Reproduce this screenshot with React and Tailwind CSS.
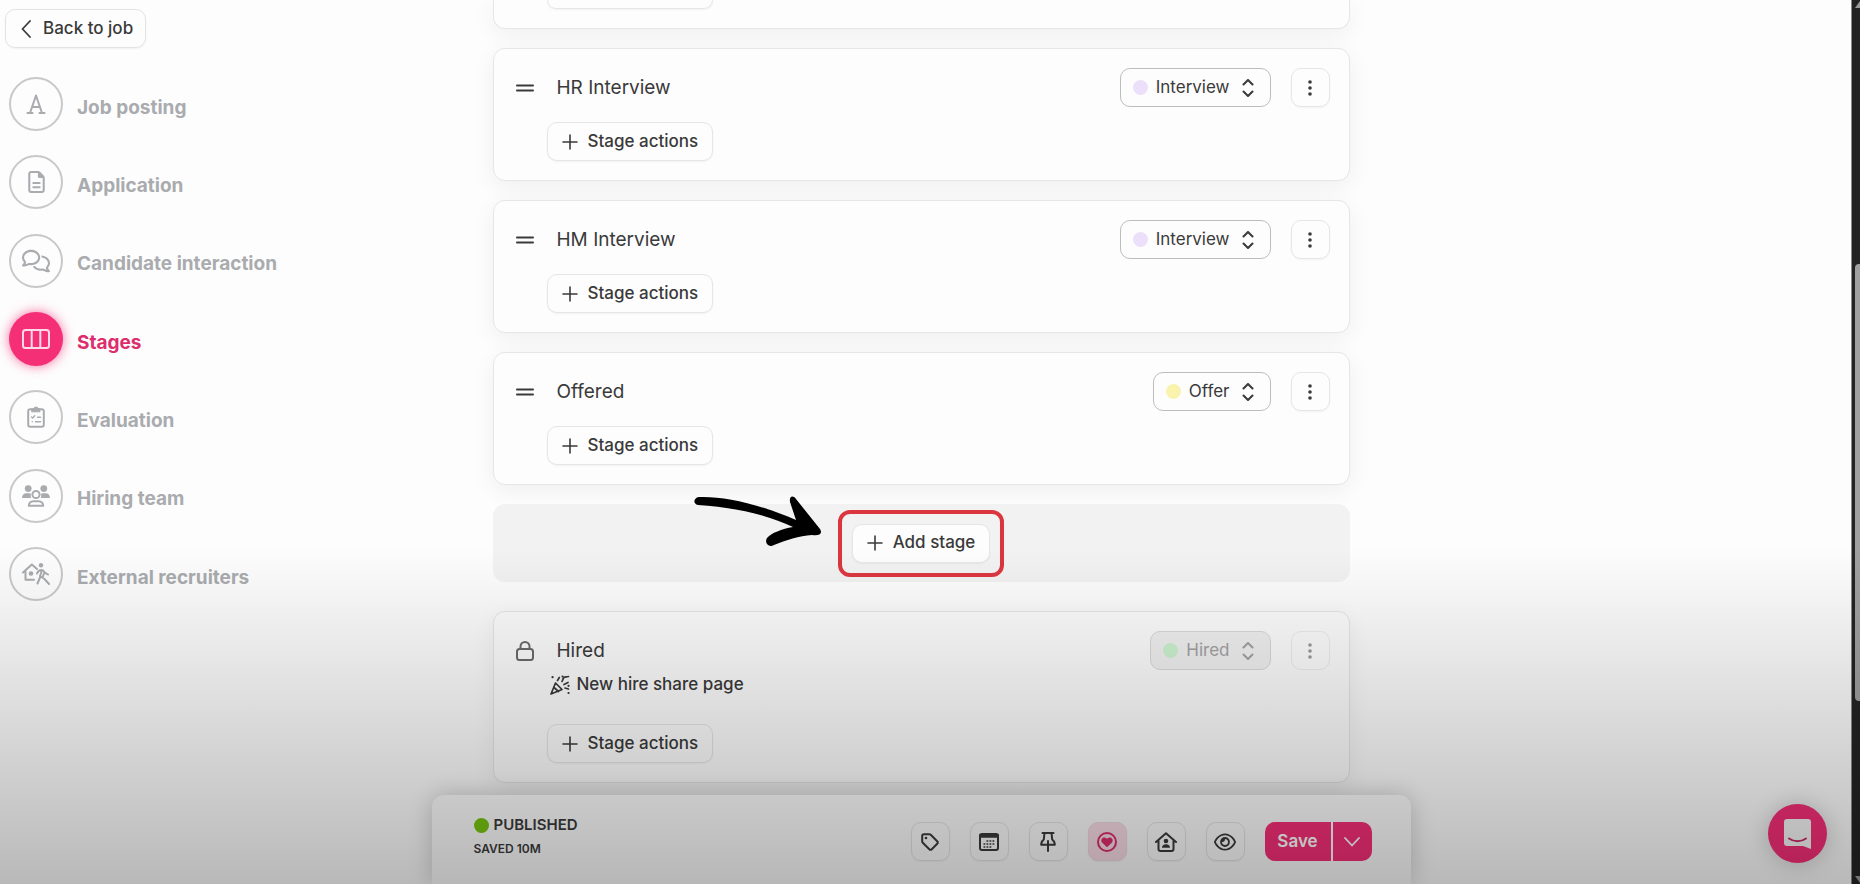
import { FaRegComments, FaRegEye, FaRegFileLines } from 'react-icons/fa6';

/* --- Icons --- */
const Svg = ({ children, className = '', viewBox = '0 0 24 24', strokeWidth = 2 }) => (
  <svg
    aria-hidden="true"
    className={className}
    viewBox={viewBox}
    fill="none"
    stroke="currentColor"
    strokeWidth={strokeWidth}
    strokeLinecap="round"
    strokeLinejoin="round"
  >
    {children}
  </svg>
);

const BackIcon = () => (
  <Svg className="w-[10px] h-[18px]" viewBox="0 0 10 18" strokeWidth={1.8}>
    <path d="M9 1 1.500 9 9 17" />
  </Svg>
);

const DownIcon = () => (
  <Svg className="w-4 h-[10px]" viewBox="0 0 16 10" strokeWidth={1.8}>
    <path d="m1 1 7 7.500L15 1" />
  </Svg>
);

const SerifAIcon = () => (
  <Svg className="w-5 h-5" viewBox="0 0 20 20">
    <path d="M4 19 10 1.500 16 19M6 13h8M1.500 19h5M13.500 19h5" />
  </Svg>
);

const ColumnsIcon = () => (
  <Svg className="w-7 h-5" viewBox="0 0 28 20">
    <rect x="1" y="1" width="26" height="18" rx="2.500" />
    <path d="M9.700 1v18M18.300 1v18" />
  </Svg>
);

const ClipboardIcon = () => (
  <Svg className="w-[18px] h-[22px]" viewBox="0 0 18 22">
    <rect x="1.200" y="3.200" width="15.600" height="17.600" rx="2" />
    <path d="M5 2.800h1.600a2.500 2.500 0 0 1 4.800 0H13v3H5z" fill="currentColor" strokeWidth="1" />
    <path d="m4.500 11 1.200 1 2-2.200M10.500 11.300h3M5.200 15.800h.1M8.500 15.800h5" strokeWidth="1.400" />
  </Svg>
);

const TeamIcon = () => (
  <Svg className="w-7 h-[22px]" viewBox="0 0 28 22">
    <g fill="currentColor" stroke="none">
      <circle cx="6.200" cy="3.600" r="3.400" />
      <circle cx="21.800" cy="3.600" r="3.400" />
      <path d="M0 13c0-3 1.800-4.800 4.500-4.800h2.600c.8 0 1.500.2 2 .6-.6 1.500-.5 3 .1 4.200zM28 13c0-3-1.800-4.800-4.500-4.800h-2.600c-.8 0-1.500.2-2 .6.6 1.500.5 3-.1 4.200z" />
    </g>
    <circle cx="14" cy="9.500" r="3.600" />
    <path d="M6.800 20.800c0-2.700 1.900-4.600 4.600-4.600h5.200c2.700 0 4.600 1.900 4.600 4.600z" />
  </Svg>
);

const RecruiterIcon = () => (
  <Svg className="w-7 h-[22px]" viewBox="0 0 28 22">
    <path d="M1 9.500 9.800 1.500 15 6M3.500 8.500v8.300h8.500" />
    <circle cx="19" cy="2.200" r="2.200" fill="currentColor" stroke="none" />
    <circle cx="9" cy="10.500" r="2.300" fill="currentColor" stroke="none" />
    <path d="M15 10.500c1-2.500 2.500-3.500 4.500-3.500s2.500 1 3.300 2.600l3.200 1.900M20 7.500l-2 5.500 4.500 3 4.500 5M18 14.500 15.500 20.500M22 10.500l-1.500 4" />
  </Svg>
);

const HandleIcon = () => (
  <Svg className="w-[18px] h-[18px]" viewBox="0 0 18 18">
    <path d="M1 6.500h16M1 11.500h16" />
  </Svg>
);

const LockIcon = () => (
  <Svg className="w-[18px] h-5" viewBox="0 0 18 20">
    <rect x="1" y="8" width="16" height="11" rx="2.500" />
    <path d="M4.500 8V5.500a4.500 4.500 0 0 1 9 0V8" />
  </Svg>
);

const PlusIcon = () => (
  <Svg className="w-4 h-4" viewBox="0 0 16 16" strokeWidth={1.6}>
    <path d="M8 1v14M1 8h14" />
  </Svg>
);

const UpDownIcon = () => (
  <Svg className="w-3 h-[18px]" viewBox="0 0 12 18">
    <path d="m1.500 5.500 4.500-4.500 4.500 4.500M1.500 12.500 6 17l4.500-4.500" />
  </Svg>
);

const DotsIcon = () => (
  <svg aria-hidden="true" className="w-1 h-4" viewBox="0 0 4 16" fill="currentColor">
    <circle cx="2" cy="2" r="1.800" />
    <circle cx="2" cy="8" r="1.800" />
    <circle cx="2" cy="14" r="1.800" />
  </svg>
);

const ConfettiIcon = () => (
  <Svg className="w-5 h-5" viewBox="0 0 20 20" strokeWidth={1.7}>
    <path d="M5.500 8 1 19l11-4.500zM4 12.500l4.500 4" />
    <path d="m7.500 5.500 1.800-3M12 6.500c1-1 .5-3 2-4s2-.3 4.500-1M14 9.500l4-2M15 13l3.500 1" />
    <path d="M2.500 2.200h.1M12.500 1.500h.1M18.500 18h.1M18.500 10.800h.1" strokeWidth="2.200" />
  </Svg>
);

const TagIcon = () => (
  <Svg className="w-[18px] h-[18px]" viewBox="0 0 18 18">
    <path d="M1.200 3a1.800 1.800 0 0 1 1.800-1.800h5.300a2 2 0 0 1 1.400.6l6.500 6.500a1.800 1.800 0 0 1 0 2.500l-5.400 5.400a1.800 1.800 0 0 1-2.500 0L1.800 9.700a2 2 0 0 1-.6-1.400z" />
    <circle cx="5" cy="5" r="1.300" fill="currentColor" stroke="none" />
  </Svg>
);

const CalendarIcon = () => (
  <Svg className="w-5 h-[18px]" viewBox="0 0 20 18">
    <rect x="1" y="1" width="18" height="16" rx="2" />
    <path d="M1 3h18" strokeWidth="3.500" />
    <path d="M7.500 8h9M4.500 11h12M4.500 14h9" strokeWidth="1.700" strokeDasharray="1.800 1.200" strokeLinecap="butt" />
  </Svg>
);

const PinIcon = () => (
  <Svg className="w-4 h-5" viewBox="0 0 16 20">
    <path d="M2.500 1h11M4.500 1l-.7 6.500C2 8.800 1.200 10.300 1.200 12.800h13.600c0-2.500-.8-4-2.600-5.300L11.500 1M8 9v10" />
  </Svg>
);

const HeartIcon = () => (
  <Svg className="w-5 h-5" viewBox="0 0 20 20">
    <circle cx="10" cy="10" r="9" />
    <path d="M10 15.200 5 10.500c-2.500-3 1.700-7 5-3.700 3.300-3.300 7.500.7 5 3.700z" fill="currentColor" stroke="none" />
  </Svg>
);

const HouseUserIcon = () => (
  <Svg className="w-[22px] h-5" viewBox="0 0 22 20">
    <path d="M1 10 11 1.200 21 10M3.500 8.500V17a2 2 0 0 0 2 2h11a2 2 0 0 0 2-2V8.500" />
    <circle cx="11" cy="9" r="2.300" fill="currentColor" stroke="none" />
    <path d="M7 15.800c0-2.200 1.500-3.500 4-3.500s4 1.300 4 3.500z" fill="currentColor" stroke="none" />
  </Svg>
);

/* --- Data --- */
const navItems = [
  { label: 'Job posting', icon: <SerifAIcon /> },
  { label: 'Application', icon: <FaRegFileLines className="w-[17px] h-[22px]" /> },
  { label: 'Candidate interaction', icon: <FaRegComments className="w-7 h-6" /> },
  { label: 'Stages', icon: <ColumnsIcon />, active: true },
  { label: 'Evaluation', icon: <ClipboardIcon /> },
  { label: 'Hiring team', icon: <TeamIcon /> },
  { label: 'External recruiters', icon: <RecruiterIcon /> },
];

const stages = [
  { id: 'hr', name: 'HR Interview', type: 'Interview', dot: 'bg-[#ecdffa]' },
  { id: 'hm', name: 'HM Interview', type: 'Interview', dot: 'bg-[#ecdffa]' },
  { id: 'offered', name: 'Offered', type: 'Offer', dot: 'bg-[#f9f3ae]' },
];

const tools = [
  { label: 'Tags', icon: <TagIcon /> },
  { label: 'Calendar', icon: <CalendarIcon /> },
  { label: 'Pin', icon: <PinIcon /> },
  { label: 'Favourite', icon: <HeartIcon />, active: true },
  { label: 'Internal page', icon: <HouseUserIcon /> },
  { label: 'Preview', icon: <FaRegEye className="w-[22px] h-5" /> },
];

/* --- Pieces --- */
const ActionButton = ({ children }) => (
  <button className="inline-flex items-center gap-2.5 h-[39px] px-[14px] rounded-[10px] border border-[#e6e6e6] bg-[#fdfdfd] text-[17px] font-medium shadow-xs whitespace-nowrap">
    <PlusIcon />
    {children}
  </button>
);

const StageCard = ({ id, name, type, dot, locked, children }) => (
  <section className="rounded-xl border border-[#e6e6e6] bg-[#fdfdfd] p-[19px] shadow-[0_6px_24px_rgba(0,0,0,0.06)]">
    <div className="flex items-center">
      <span className="flex justify-center w-6 mr-5">
        {locked ? <span className="text-[#6b6b6b]"><LockIcon /></span> : <HandleIcon />}
      </span>
      <h2 className="flex-1 text-[19px] leading-6">{name}</h2>

      <label
        className={`relative flex items-center h-[39px] pl-3 rounded-[10px] border text-[17px] ${
          locked ? 'border-[#d9d9d9] bg-[#f1f1f1] text-[#a2a2a4]' : 'border-[#bdbdbd] bg-[#fdfdfd]'
        }`}
      >
        <span className={`w-[15px] h-[15px] rounded-full ${dot}`}></span>
        <select
          id={`stage-${id}`}
          aria-label={`${name} type`}
          disabled={locked}
          defaultValue={type}
          className="appearance-none field-sizing-content h-full pl-2 pr-10 bg-transparent outline-none"
        >
          <option>{type}</option>
        </select>
        <span className="absolute right-4 pointer-events-none">
          <UpDownIcon />
        </span>
      </label>

      <button
        aria-label={`${name} options`}
        disabled={locked}
        className={`flex items-center justify-center w-[39px] h-[39px] ml-5 rounded-[10px] border ${
          locked ? 'border-[#ededed] text-[#9a9a9a]' : 'border-[#e6e6e6] shadow-xs'
        }`}
      >
        <DotsIcon />
      </button>
    </div>
    {children}
    <div className="mt-[15px] pl-[34px] flex">
      <ActionButton>Stage actions</ActionButton>
    </div>
  </section>
);

const Sidebar = () => (
  <aside className="flex flex-col items-start pt-[9px] pl-[5px]">
    <a
      href="#job"
      className="flex items-center gap-3 h-[39px] pl-[15px] pr-3 rounded-[10px] border border-[#e3e3e3] text-[17px] font-medium shadow-xs whitespace-nowrap"
    >
      <BackIcon />
      Back to job
    </a>
    <nav className="flex flex-col justify-between h-[524px] mt-[29px] pl-1">
      {navItems.map((item) => (
        <a
          key={item.label}
          href="#section"
          className={`flex items-center gap-[14px] text-[19px] font-bold whitespace-nowrap ${
            item.active ? 'text-[#dc2d6c]' : 'text-[#a9abae]'
          }`}
        >
          <span
            className={`flex items-center justify-center w-[54px] h-[54px] rounded-full ${
              item.active
                ? 'bg-[#f42f76] text-[#ffd9e7] shadow-[0_0_12px_rgba(244,47,118,0.7)]'
                : 'border-2 border-[#c8c8c8]'
            }`}
          >
            {item.icon}
          </span>
          <span className="pt-2">{item.label}</span>
        </a>
      ))}
    </nav>
  </aside>
);

const BottomBar = () => (
  <footer className="absolute inset-x-0 bottom-0 pr-[9px]">
    <div className="flex items-start justify-between max-w-[979px] h-[89px] mx-auto pt-[18px] pl-[42px] pr-[39px] rounded-t-xl bg-[#fbfbfb] shadow-[0_0_24px_rgba(0,0,0,0.2)]">
      <div className="font-semibold">
        <p className="flex items-center gap-[5px] text-[15px] leading-6">
          <span className="w-[15px] h-[15px] rounded-full bg-[#77c411]"></span>
          PUBLISHED
        </p>
        <p className="text-xs leading-6">SAVED 10M</p>
      </div>

      <div className="flex items-center gap-5 pt-[9px]">
        {tools.map((tool) => (
          <button
            key={tool.label}
            aria-label={tool.label}
            className={`flex items-center justify-center w-[39px] h-[39px] rounded-[10px] border shadow-xs ${
              tool.active ? 'border-[#f3d5e0] bg-[#f8dbe5] text-[#dc2d6c]' : 'border-[#e3e3e3]'
            }`}
          >
            {tool.icon}
          </button>
        ))}
        <div className="flex gap-0.5 text-white">
          <button className="w-[66px] h-[39px] rounded-l-[10px] bg-[#f42f76] text-[17px] font-semibold">Save</button>
          <button aria-label="More save options" className="flex items-center justify-center w-[39px] h-[39px] rounded-r-[10px] bg-[#f42f76]">
            <DownIcon />
          </button>
        </div>
      </div>
    </div>
  </footer>
);

const Scrollbar = () => (
  <div className="flex flex-col w-[9px] h-full pl-[3px] border-l border-[#8a8a8a] bg-[#232323] text-[#9a9a9a]">
    <svg aria-hidden="true" className="w-[5px] h-2" viewBox="0 0 5 8" fill="currentColor">
      <path d="M0 8 5 1v7z" />
    </svg>
    <div className="flex-[256]"></div>
    <div className="flex-[437] rounded-l-sm bg-[#a0a0a0]"></div>
    <div className="flex-[175]"></div>
    <svg aria-hidden="true" className="w-[5px] h-2" viewBox="0 0 5 8" fill="currentColor">
      <path d="M0 0 5 7V0z" />
    </svg>
  </div>
);

export default function App() {
  return (
    <div className="relative flex h-screen overflow-hidden bg-[#fdfdfd] font-['Inter',sans-serif] text-[#3a3a3a]">
      <div className="relative flex-1 grid grid-cols-[minmax(0,1fr)_minmax(0,857px)_minmax(0,1fr)] pr-[9px]">
        <Sidebar />

        <main className="flex flex-col gap-[19px]">
          {/* Tail of the stage scrolled off the top */}
          <div className="h-[29px] pl-[53px] rounded-b-xl border border-t-0 border-[#e6e6e6] shadow-[0_6px_24px_rgba(0,0,0,0.06)]">
            <button
              aria-label="Stage actions"
              className="block w-[166px] h-[9px] rounded-b-[10px] border border-t-0 border-[#e6e6e6] shadow-xs"
            ></button>
          </div>

          {stages.map((stage) => (
            <StageCard key={stage.id} {...stage} />
          ))}

          {/* Add stage */}
          <div className="relative flex items-center justify-center h-[78px] rounded-xl bg-[#f2f2f2]">
            <div className="p-2.5 rounded-xl border-4 border-[#db3640]">
              <ActionButton>Add stage</ActionButton>
            </div>
            <svg
              aria-hidden="true"
              className="absolute right-1/2 -top-2 mr-[100px] w-[127px] h-[51px]"
              viewBox="0 0 127 51"
              fill="#000"
            >
              <path d="M5 1C30 0 65 8 102 24L96 6C95 0 99-1 102 3L126 33C129 38 125 40 118 39C105 40 92 44 80 49C75 52 70 47 73 42C77 37 88 33 99 31C70 17 34 11 4 9C-1 8-1 2 5 1Z" />
            </svg>
          </div>

          <div className="mt-2.5">
            <StageCard id="hired" name="Hired" type="Hired" dot="bg-[#cdf3d0]" locked>
              <div className="flex items-center gap-[7px] h-[30px] mb-6 pl-[37px] text-[17px] font-medium">
                <ConfettiIcon />
                New hire share page
              </div>
            </StageCard>
          </div>
        </main>

        <BottomBar />

        {/* Chat launcher */}
        <button
          aria-label="Open chat"
          className="absolute right-6 bottom-[21px] flex items-center justify-center w-[59px] h-[59px] rounded-full bg-[#f42f76] shadow-[0_1px_24px_rgba(0,0,0,0.2)]"
        >
          <svg aria-hidden="true" className="w-[27px] h-[30px]" viewBox="0 0 27 30">
            <path d="M3 0h21a3 3 0 0 1 3 3v27l-8-3H3a3 3 0 0 1-3-3V3a3 3 0 0 1 3-3z" fill="#f5f5f5" />
            <path d="M5 19.500c5 3.600 12 3.600 17 0" fill="none" stroke="#c92a62" strokeWidth="2" strokeLinecap="round" />
          </svg>
        </button>
      </div>

      <Scrollbar />

      {/* Shade over the lower part of the page */}
      <div className="absolute inset-x-0 bottom-0 h-[38%] bg-linear-to-t from-black/27 to-transparent pointer-events-none"></div>
    </div>
  );
}
